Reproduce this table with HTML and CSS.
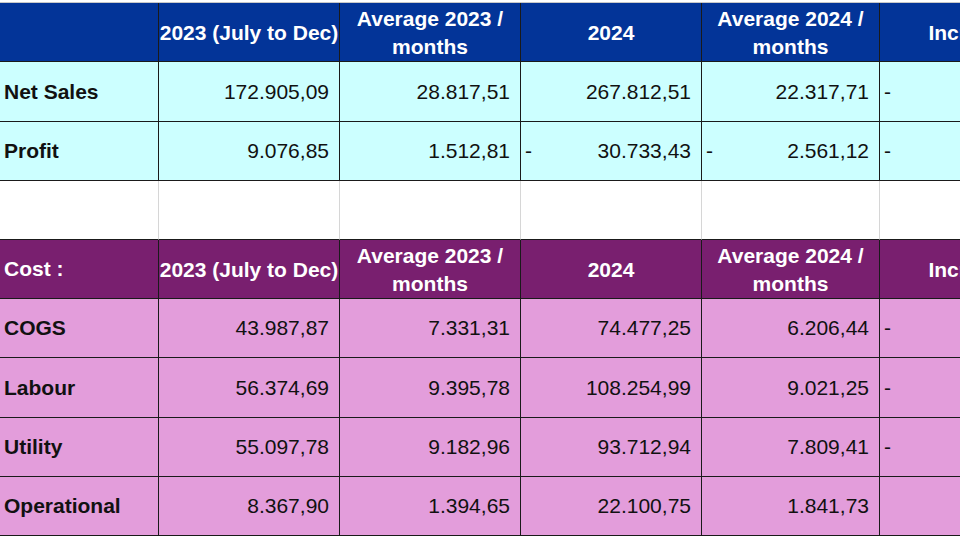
FILE: index.html
```html
<!DOCTYPE html>
<html>
<head>
<meta charset="utf-8">
<link rel="stylesheet" href="styles.css">
</head>
<body>
<div class="topstrip"></div>
<div class="sheet">
  <div class="c hb"></div>
  <div class="c hb th">2023 (July to Dec)</div>
  <div class="c hb th">Average 2023 /<br>months</div>
  <div class="c hb th">2024</div>
  <div class="c hb th">Average 2024 /<br>months</div>
  <div class="c hb th">Increase</div>

  <div class="c cy lbl r60">Net Sales</div>
  <div class="c cy num">172.905,09</div>
  <div class="c cy num">28.817,51</div>
  <div class="c cy num">267.812,51</div>
  <div class="c cy num">22.317,71</div>
  <div class="c cy neg"><span>-</span></div>

  <div class="c cy lbl">Profit</div>
  <div class="c cy num">9.076,85</div>
  <div class="c cy num">1.512,81</div>
  <div class="c cy neg"><span>-</span><span>30.733,43</span></div>
  <div class="c cy neg"><span>-</span><span>2.561,12</span></div>
  <div class="c cy neg"><span>-</span></div>

  <div class="c blank"></div>
  <div class="c blank"></div>
  <div class="c blank"></div>
  <div class="c blank"></div>
  <div class="c blank"></div>
  <div class="c blank"></div>

  <div class="c hp lbl wl">Cost :</div>
  <div class="c hp th">2023 (July to Dec)</div>
  <div class="c hp th">Average 2023 /<br>months</div>
  <div class="c hp th">2024</div>
  <div class="c hp th">Average 2024 /<br>months</div>
  <div class="c hp th">Increase</div>

  <div class="c pk lbl">COGS</div>
  <div class="c pk num">43.987,87</div>
  <div class="c pk num">7.331,31</div>
  <div class="c pk num">74.477,25</div>
  <div class="c pk num">6.206,44</div>
  <div class="c pk neg"><span>-</span></div>

  <div class="c pk lbl">Labour</div>
  <div class="c pk num">56.374,69</div>
  <div class="c pk num">9.395,78</div>
  <div class="c pk num">108.254,99</div>
  <div class="c pk num">9.021,25</div>
  <div class="c pk neg"><span>-</span></div>

  <div class="c pk lbl">Utility</div>
  <div class="c pk num">55.097,78</div>
  <div class="c pk num">9.182,96</div>
  <div class="c pk num">93.712,94</div>
  <div class="c pk num">7.809,41</div>
  <div class="c pk neg"><span>-</span></div>

  <div class="c pk lbl">Operational</div>
  <div class="c pk num">8.367,90</div>
  <div class="c pk num">1.394,65</div>
  <div class="c pk num">22.100,75</div>
  <div class="c pk num">1.841,73</div>
  <div class="c pk"></div>
</div>
</body>
</html>
```

FILE: styles.css
```css
html, body {
  margin: 0;
  padding: 0;
  background: #ffffff;
  overflow: hidden;
}
body {
  width: 960px;
  height: 539px;
  font-family: "Liberation Sans", Arial, sans-serif;
  font-size: 21px;
  color: #111111;
}
.topstrip {
  height: 2px;
  border-bottom: 1px solid #c8c8c8;
}
.sheet {
  display: grid;
  grid-template-columns: 159px 181px 181px 181px 178px 183px;
  grid-template-rows: 59px 60px 59px 59px 59px 59px 60px 59px 59px;
  width: 963px;
}
.c {
  box-sizing: border-box;
  border-right: 1px solid #1a1a1a;
  border-bottom: 1px solid #1a1a1a;
  display: flex;
  align-items: center;
  white-space: nowrap;
  overflow: visible;
}
.hb { background: #033498; }
.hp { background: #791f6f; }
.cy { background: #ccffff; }
.pk { background: #e39ddb; }
.th {
  color: #ffffff;
  font-weight: bold;
  justify-content: center;
  text-align: center;
  line-height: 28px;
  padding-top: 2px;
}
.lbl {
  font-weight: bold;
  padding-left: 4px;
}
.wl { color: #ffffff; }
.num {
  justify-content: flex-end;
  padding-right: 10px;
}
.neg {
  justify-content: space-between;
  padding-left: 4px;
  padding-right: 10px;
}
.blank {
  background: #ffffff;
  border-right: 1px solid #d6d6d6;
}
```
